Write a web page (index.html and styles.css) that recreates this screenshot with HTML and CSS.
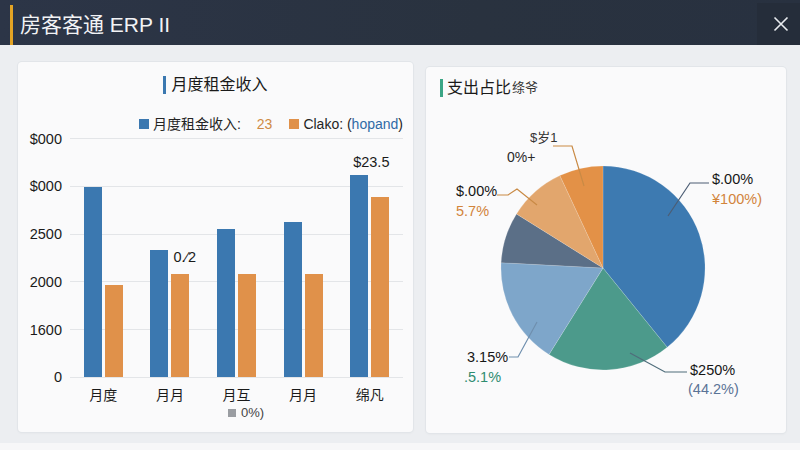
FILE: index.html
```html
<!DOCTYPE html>
<html lang="zh-CN">
<head>
<meta charset="utf-8">
<title>房客客通 ERP II</title>
<link rel="stylesheet" href="styles.css">
</head>
<body>
<header class="topbar">
  <span class="topbar-accent"></span>
  <h1 class="topbar-title">房客客通 ERP II</h1>
  <button class="topbar-close" aria-label="关闭">
    <svg width="16" height="16" viewBox="0 0 16 16"><path d="M1.5 1.5 L14.5 14.5 M14.5 1.5 L1.5 14.5" stroke="#e9ecef" stroke-width="1.6" fill="none"/></svg>
  </button>
</header>

<main class="dashboard">
  <section class="card card-income">
    <h2 class="card-title"><span class="title-mark mark-blue"></span>月度租金收入</h2>
    <div class="legend">
      <span class="swatch swatch-blue"></span><span>月度租金收入:</span>
      <span class="legend-num">23</span>
      <span class="swatch swatch-orange legend-gap"></span><span>Clako: (<span class="legend-link">hopand</span>)</span>
    </div>

    <div class="chart">
      <div class="y-axis">
        <div class="tick"><span>$000</span></div>
        <div class="tick"><span>$000</span></div>
        <div class="tick"><span>2500</span></div>
        <div class="tick"><span>2000</span></div>
        <div class="tick"><span>1600</span></div>
        <div class="tick"><span>0</span></div>
      </div>
      <div class="plot">
        <div class="gridlines">
          <i></i><i></i><i></i><i></i><i></i><i></i>
        </div>
        <div class="bars">
          <div class="group">
            <div class="bar bar-blue" style="height:190px"></div>
            <div class="bar bar-orange" style="height:92px"></div>
          </div>
          <div class="group">
            <div class="bar bar-blue" style="height:127px"></div>
            <div class="bar bar-orange" style="height:103px"><span class="bar-note note-left">0.⁄2</span></div>
          </div>
          <div class="group">
            <div class="bar bar-blue" style="height:148px"></div>
            <div class="bar bar-orange" style="height:103px"></div>
          </div>
          <div class="group">
            <div class="bar bar-blue" style="height:155px"></div>
            <div class="bar bar-orange" style="height:103px"></div>
          </div>
          <div class="group">
            <div class="bar bar-blue" style="height:202px"><span class="bar-note note-top">$23.5</span></div>
            <div class="bar bar-orange" style="height:180px"></div>
          </div>
        </div>
      </div>
      <div class="x-axis">
        <span>月度</span><span>月月</span><span>月互</span><span>月月</span><span>绵凡</span>
      </div>
      <div class="x-foot"><span class="swatch swatch-gray"></span>0%)</div>
    </div>
  </section>

  <section class="card card-share">
    <h2 class="card-title share-title"><span class="title-mark mark-green"></span>支出占比<small>绦爷</small></h2>
    <svg class="pie" width="360" height="333" viewBox="426 100 360 333">
      <g class="slices">
        <path fill="#3d7ab1" d="M603 268 L603 166 A102 102 0 0 1 667.2 347.3 Z"/>
        <path fill="#4c9a8b" d="M603 268 L667.2 347.3 A102 102 0 0 1 549 354.5 Z"/>
        <path fill="#7ea6ca" d="M603 268 L549 354.5 A102 102 0 0 1 501.1 262.7 Z"/>
        <path fill="#5b6f87" d="M603 268 L501.1 262.7 A102 102 0 0 1 516.5 214 Z"/>
        <path fill="#e2a66d" d="M603 268 L516.5 214 A102 102 0 0 1 559.9 175.6 Z"/>
        <path fill="#e39147" d="M603 268 L559.9 175.6 A102 102 0 0 1 603 166 Z"/>
      </g>
      <g class="leaders" fill="none" stroke-width="1.2">
        <polyline stroke="#c98a45" points="553,146 572,146 584,186"/>
        <polyline stroke="#c98a45" points="497,195 508,195 517,189 537,205"/>
        <polyline stroke="#4c5d74" points="709,183 690,183 668,216"/>
        <polyline stroke="#6f8fae" points="509,357 518,357 537,322"/>
        <polyline stroke="#4f6d7b" points="687,372 665,372 630,353"/>
      </g>
      <g class="pie-labels">
        <text class="lbl-sm" x="530" y="142">$岁1</text>
        <text class="lbl-md" x="507" y="162">0%+</text>
        <text class="lbl" x="456" y="196">$.00%</text>
        <text class="lbl lbl-orange" x="456" y="216">5.7%</text>
        <text class="lbl" x="712" y="184">$.00%</text>
        <text class="lbl lbl-orange" x="712" y="204">¥100%)</text>
        <text class="lbl" x="467" y="362">3.15%</text>
        <text class="lbl lbl-green" x="464" y="382">.5.1%</text>
        <text class="lbl" x="690" y="375">$250%</text>
        <text class="lbl lbl-slate" x="688" y="394">(44.2%)</text>
      </g>
    </svg>
  </section>
</main>
<div class="bottom-strip"></div>
</body>
</html>
```

FILE: styles.css
```css
* { box-sizing: border-box; }

html, body {
  margin: 0;
  padding: 0;
  width: 800px;
  height: 450px;
  overflow: hidden;
  background: #f6f6f7;
  font-family: "Liberation Sans", "Noto Sans CJK SC", sans-serif;
  color: #222;
}

/* top bar */
.topbar {
  height: 45px;
  display: flex;
  align-items: center;
  background: linear-gradient(90deg, #2c3547 0%, #29323f 60%, #283140 100%);
}

.topbar-accent {
  align-self: flex-end;
  width: 3px;
  height: 40px;
  margin-left: 10px;
  background: #e3a324;
}

.topbar-title {
  margin: 0 0 0 7px;
  font-size: 21px;
  font-weight: 400;
  color: #f2f3f5;
  letter-spacing: 0;
}

.topbar-close {
  margin-left: auto;
  align-self: stretch;
  width: 43px;
  margin-top: 3px;
  border: 0;
  padding: 0 0 0 4px;
  background: #252d3a;
  display: flex;
  align-items: center;
  justify-content: center;
}

/* dashboard */
.dashboard {
  height: 398px;
  display: flex;
  align-items: flex-start;
  gap: 13px;
  padding: 17px 14px 0 18px;
  background: #eceef1;
}

.card {
  background: #fafafb;
  border-radius: 4px;
  box-shadow: 0 0 0 1px #e2e5e9, 0 1px 3px rgba(0, 0, 0, 0.05);
}

.card-title {
  margin: 0;
  display: flex;
  align-items: center;
  gap: 5px;
  font-size: 16px;
  line-height: 18px;
  font-weight: 400;
  color: #1a1a1a;
}

.title-mark {
  width: 3px;
  height: 18px;
}

.mark-blue { background: #3b78b0; }
.mark-green { background: #3ba585; }

/* income card */
.card-income {
  width: 395px;
  height: 370px;
  padding: 14px 10px 0 10px;
}

.card-income .card-title {
  justify-content: center;
  padding-left: 0;
}

.legend {
  margin-top: 21px;
  display: flex;
  justify-content: flex-end;
  align-items: center;
  gap: 4px;
  font-size: 14px;
  line-height: 18px;
  color: #242424;
}

.legend-num {
  margin-left: 12px;
  color: #cf8a45;
}

.legend-gap { margin-left: 13px; }

.legend-link { color: #2f6aa6; }

.swatch {
  display: inline-block;
  width: 10px;
  height: 10px;
}

.swatch-blue { background: #3b78b0; }
.swatch-orange { background: #e0914a; }
.swatch-gray { background: #9a9da2; width: 8px; height: 8px; }

.chart {
  margin-top: 5px;
  display: grid;
  grid-template-columns: 34px 1fr;
  column-gap: 8px;
}

.y-axis {
  height: 240px;
  display: flex;
  flex-direction: column;
  justify-content: space-between;
}

.tick {
  height: 1px;
  display: flex;
  align-items: center;
  justify-content: flex-end;
  font-size: 14.5px;
  color: #1a1a1a;
}

.plot {
  height: 240px;
  display: grid;
}

.gridlines,
.bars {
  grid-area: 1 / 1;
}

.gridlines {
  display: flex;
  flex-direction: column;
  justify-content: space-between;
}

.gridlines i {
  display: block;
  height: 1px;
  background: #e3e5e8;
}

.bars {
  height: 239px;
  display: flex;
}

.group {
  flex: 1;
  display: flex;
  justify-content: center;
  align-items: flex-end;
  gap: 3px;
}

.bar {
  width: 18px;
  position: relative;
}

.bar-blue { background: #3b78b0; }
.bar-orange { background: #e0914a; }

.bar-note {
  position: absolute;
  bottom: 100%;
  white-space: nowrap;
  font-size: 14.5px;
  color: #1a1a1a;
}

.note-left {
  left: 2px;
  margin-bottom: 9px;
}

.note-top {
  left: 3px;
  margin-bottom: 5px;
}

.x-axis {
  grid-column: 2;
  margin-top: 8px;
  display: flex;
  font-size: 14px;
  line-height: 18px;
  color: #1a1a1a;
}

.x-axis span {
  flex: 1;
  text-align: center;
}

.x-foot {
  grid-column: 2;
  margin-top: 1px;
  padding-left: 19px;
  display: flex;
  justify-content: center;
  align-items: center;
  gap: 5px;
  font-size: 13px;
  line-height: 16px;
  color: #444;
}

/* share card */
.card-share {
  flex: 1;
  height: 366px;
  margin-top: 5px;
  overflow: hidden;
}

.share-title {
  padding: 12px 0 0 14px;
  margin-bottom: 3px;
  gap: 4px;
}

.share-title small {
  font-size: 13px;
  margin-left: -3px;
  color: #333;
}

.pie {
  display: block;
}

.slices path {
  stroke: rgba(255, 255, 255, 0.25);
  stroke-width: 0.6;
}

.pie-labels text {
  font-family: "Liberation Sans", "Noto Sans CJK SC", sans-serif;
}

.lbl {
  font-size: 14.5px;
  fill: #161616;
}

.lbl-sm {
  font-size: 13px;
  fill: #333;
}

.lbl-md {
  font-size: 14px;
  fill: #2a2a2a;
}

.lbl-orange { fill: #d2843b; }
.lbl-green { fill: #2e8c70; }
.lbl-slate { fill: #5a7396; }

.bottom-strip {
  height: 7px;
  background: #f7f7f8;
}
```
